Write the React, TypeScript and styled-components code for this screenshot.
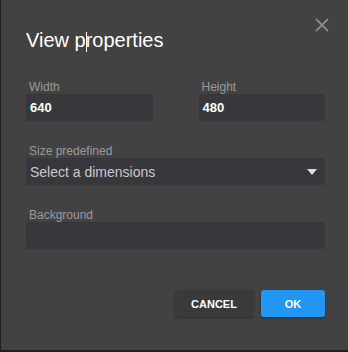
import styled, { createGlobalStyle } from "styled-components";

const Global = createGlobalStyle`
  html, body {
    margin: 0;
    padding: 0;
    background: #1f1f1f;
  }
  * {
    box-sizing: border-box;
  }
`;

const Dialog = styled.div`
  position: relative;
  width: 347px;
  height: 350px;
  margin-left: 1px;
  background: #424242;
  font-family: "Liberation Sans", Arial, sans-serif;
  padding: 27px 23px 0 25px;
`;

const Title = styled.h2`
  margin: 0;
  font-size: 20px;
  font-weight: 400;
  color: #ffffff;
  line-height: 26px;
  height: 26px;
`;

const Caret = styled.span`
  display: inline-block;
  width: 1px;
  height: 20px;
  background: #ffffff;
  vertical-align: -5px;
  margin: 0 -1px 0 0;
`;

const Close = styled.button`
  position: absolute;
  top: 17px;
  right: 18px;
  width: 16px;
  height: 16px;
  padding: 0;
  border: none;
  background: none;
  cursor: pointer;
`;

const Row = styled.div`
  display: flex;
  gap: 46px;
  margin-top: 27px;
`;

const Field = styled.div<{ $top?: number }>`
  display: flex;
  flex-direction: column;
  flex: 1;
  margin-top: ${(p) => p.$top ?? 0}px;
`;

const Label = styled.label`
  font-size: 12px;
  color: #9a9a9a;
  line-height: 14px;
  height: 14px;
  padding-left: 3px;
`;

const Box = styled.div`
  height: 27px;
  background: #38373c;
  border-radius: 2px;
  display: flex;
  align-items: center;
  padding: 0 4px;
  color: #ffffff;
  font-size: 13px;
  font-weight: 700;
`;

const SelectBox = styled(Box)`
  justify-content: space-between;
  font-weight: 400;
  font-size: 14px;
  color: #c9c9c9;
  padding-right: 8px;
`;

const Footer = styled.div`
  display: flex;
  justify-content: flex-end;
  gap: 8px;
  margin-top: 41px;
`;

const Button = styled.button<{ $primary?: boolean }>`
  height: 27px;
  width: ${(p) => (p.$primary ? 64 : 78)}px;
  border: none;
  border-radius: 3px;
  font-family: "Liberation Sans", Arial, sans-serif;
  font-weight: 700;
  font-size: 11px;
  color: #ffffff;
  background: ${(p) => (p.$primary ? "#2196f3" : "#3a3a3a")};
  box-shadow: 0 1px 3px rgba(0, 0, 0, 0.35);
  cursor: pointer;
`;

export default function App() {
  return (
    <>
      <Global />
      <Dialog>
        <Title>
          View p<Caret />roperties
        </Title>
        <Close aria-label="close">
          <svg width="16" height="16" viewBox="0 0 16 16">
            <path d="M2 2 L14 14 M14 2 L2 14" stroke="#8a8a8a" strokeWidth="1.8" />
          </svg>
        </Close>
        <Row>
          <Field>
            <Label>Width</Label>
            <Box>640</Box>
          </Field>
          <Field>
            <Label>Height</Label>
            <Box>480</Box>
          </Field>
        </Row>
        <Field $top={23}>
          <Label>Size predefined</Label>
          <SelectBox>
            Select a dimensions
            <svg width="10" height="6" viewBox="0 0 10 6">
              <path d="M0 0 H10 L5 6 Z" fill="#e0e0e0" />
            </svg>
          </SelectBox>
        </Field>
        <Field $top={23}>
          <Label>Background</Label>
          <Box />
        </Field>
        <Footer>
          <Button>CANCEL</Button>
          <Button $primary>OK</Button>
        </Footer>
      </Dialog>
    </>
  );
}
